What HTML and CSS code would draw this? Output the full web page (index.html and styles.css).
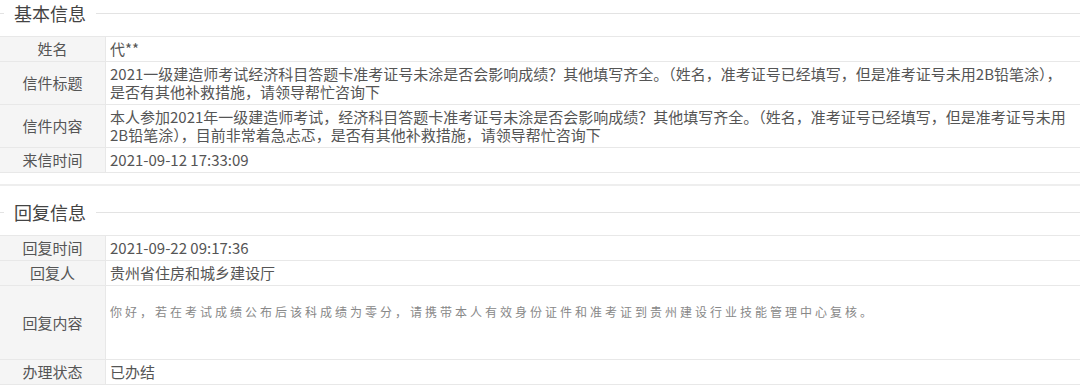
FILE: index.html
```html
<!DOCTYPE html>
<html lang="zh-CN">
<head>
<meta charset="utf-8">
<title>信件详情</title>
<link rel="stylesheet" href="styles.css">
</head>
<body>
<section class="group">
  <div class="group-head"><span class="line-l"></span><h2 class="group-title">基本信息</h2><span class="line-r"></span></div>
  <table class="info">
    <tr><th>姓名</th><td>代**</td></tr>
    <tr><th>信件标题</th><td>2021一级建造师考试经济科目答题卡准考证号未涂是否会影响成绩？其他填写齐全。（姓名，准考证号已经填写，但是准考证号未用2B铅笔涂），是否有其他补救措施，请领导帮忙咨询下</td></tr>
    <tr><th>信件内容</th><td>本人参加2021年一级建造师考试，经济科目答题卡准考证号未涂是否会影响成绩？其他填写齐全。（姓名，准考证号已经填写，但是准考证号未用2B铅笔涂），目前非常着急忐忑，是否有其他补救措施，请领导帮忙咨询下</td></tr>
    <tr><th>来信时间</th><td>2021-09-12 17:33:09</td></tr>
  </table>
</section>
<div class="divider"></div>
<section class="group">
  <div class="group-head"><span class="line-l"></span><h2 class="group-title">回复信息</h2><span class="line-r"></span></div>
  <table class="info">
    <tr><th>回复时间</th><td>2021-09-22 09:17:36</td></tr>
    <tr><th>回复人</th><td>贵州省住房和城乡建设厅</td></tr>
    <tr><th>回复内容</th><td><div class="reply">你好，若在考试成绩公布后该科成绩为零分，请携带本人有效身份证件和准考证到贵州建设行业技能管理中心复核。</div></td></tr>
    <tr><th>办理状态</th><td>已办结</td></tr>
  </table>
</section>
</body>
</html>
```
FILE: styles.css
```css
html, body {
  margin: 0;
  padding: 0;
  background: #ffffff;
}
body {
  width: 1080px;
  font-family: "Noto Sans CJK SC", "Liberation Sans", sans-serif;
  color: #555555;
}
.group-head {
  display: flex;
  align-items: center;
  height: 27px;
  margin-bottom: 9px;
}
.line-l {
  width: 4px;
  border-top: 1px solid #e3e3e3;
}
.line-r {
  flex: 1;
  border-top: 1px solid #e3e3e3;
}
.group-title {
  margin: 0;
  padding: 0 10px;
  font-size: 18px;
  font-weight: normal;
  line-height: 27px;
  color: #444444;
}
.info {
  width: 100%;
  border-collapse: collapse;
  font-size: 15px;
  line-height: 18px;
}
.info th,
.info td {
  border-top: 1px solid #e8e8e8;
  border-bottom: 1px solid #e8e8e8;
  padding: 3px 4px;
  vertical-align: middle;
}
.info th {
  width: 97px;
  background: #f5f5f5;
  font-weight: normal;
  text-align: center;
  color: #555555;
  border-right: 1px solid #e8e8e8;
}
.info td {
  text-align: left;
  color: #555555;
}
.reply {
  height: 67px;
  box-sizing: border-box;
  padding-top: 14px;
  font-size: 12px;
  letter-spacing: 3px;
  color: #888888;
}
.divider {
  margin: 11px 0 13px;
  border-top: 2px solid #eeeeee;
}
```
